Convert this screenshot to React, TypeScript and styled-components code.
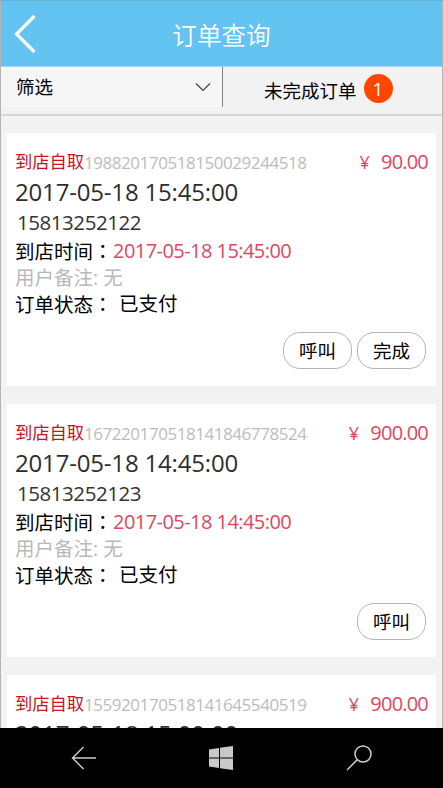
import React from "react";
import styled, { createGlobalStyle } from "styled-components";

const GlobalStyle = createGlobalStyle`
  * { box-sizing: border-box; }
  html, body { margin: 0; padding: 0; }
  body {
    width: 443px;
    height: 788px;
    overflow: hidden;
    background: #f2f2f2;
    font-family: "Open Sans", "Noto Sans CJK SC", sans-serif;
    color: #000;
  }
`;

const Screen = styled.div`
  width: 443px;
  height: 788px;
  display: flex;
  flex-direction: column;
  overflow: hidden;
`;

const Page = styled.div`
  flex: 1;
  min-height: 0;
  display: flex;
  flex-direction: column;
  overflow: hidden;
  background: #f2f2f2;
  border: 1px solid #b4b4b4;
  border-top-color: #67afd2;
  border-bottom: 0;
`;

const Header = styled.header`
  flex: none;
  height: 66px;
  display: grid;
  grid-template-columns: 60px 1fr 60px;
  align-items: center;
  background: #63c3f1;
  border-bottom: 1px solid #a8d8ef;
`;

const BackButton = styled.button`
  width: 48px;
  height: 48px;
  padding: 0;
  border: 0;
  background: none;
  display: flex;
  align-items: center;
  justify-content: center;
`;

const Title = styled.h1`
  margin: 0;
  padding-top: 4px;
  text-align: center;
  font-size: 24.6px;
  line-height: 36px;
  font-weight: 350;
  color: #fff;
`;

const FilterBar = styled.div`
  flex: none;
  height: 49px;
  display: flex;
  align-items: flex-start;
  border-bottom: 2px solid #d7d7d7;
`;

const Filter = styled.div`
  width: 222px;
  height: 40px;
  padding: 0 11px 0 15px;
  display: flex;
  align-items: center;
  justify-content: space-between;
  background: #f6f6f6;
  border-right: 1px solid #858585;
  font-size: 18.5px;
  line-height: 40px;
`;

const Pending = styled.div`
  flex: 1;
  height: 43px;
  padding-left: 41px;
  display: flex;
  align-items: center;
  gap: 7px;
  font-size: 18.5px;
  line-height: 43px;
`;

const PendingLabel = styled.span`
  padding-top: 4px;
`;

const Count = styled.span`
  width: 29px;
  height: 29px;
  border-radius: 50%;
  background: #ff4600;
  color: #fff;
  font-size: 19px;
  font-weight: 400;
  line-height: 30px;
  text-align: center;
`;

const Orders = styled.main`
  padding: 17px 6px 0;
  display: flex;
  flex-direction: column;
  gap: 18px;
`;

const Card = styled.article`
  flex: none;
  height: 253px;
  padding: 15px 8px 17px;
  display: flex;
  flex-direction: column;
  background: #fff;
`;

const Summary = styled.div`
  height: 27px;
  display: flex;
  align-items: center;
  white-space: nowrap;
`;

const Kind = styled.span`
  width: 69px;
  font-size: 17.3px;
  line-height: 27px;
  color: #c8141c;
`;

const OrderNo = styled.span`
  font-size: 17px;
  line-height: 27px;
  padding-top: 2px;
  letter-spacing: -0.45px;
  color: #bcbcbc;
`;

const Price = styled.span`
  margin-left: auto;
  padding-top: 1px;
  font-size: 20px;
  line-height: 27px;
  letter-spacing: -0.8px;
  color: #dc4862;
`;

const Yen = styled.span`
  margin-right: 12px;
  font-size: 18px;
`;

const Placed = styled.div`
  height: 34px;
  font-size: 24px;
  line-height: 33px;
  letter-spacing: -0.18px;
  color: #2e2e2e;
  white-space: nowrap;
`;

const Phone = styled.div`
  height: 28px;
  padding-left: 2px;
  font-size: 20.5px;
  line-height: 27px;
  letter-spacing: -0.45px;
  color: #333;
`;

const Detail = styled.div<{ $muted?: boolean }>`
  height: 26.5px;
  display: flex;
  font-size: 19.5px;
  line-height: 27px;
  white-space: pre;
  color: ${(p) => (p.$muted ? "#b9b9b9" : "#000")};
`;

const Label = styled.span<{ $width: number }>`
  width: ${(p) => p.$width}px;
`;

const Colon = styled.span`
  font-family: "Noto Sans CJK TC", sans-serif;
`;

const Arrival = styled.span`
  font-size: 20px;
  letter-spacing: -0.55px;
  color: #dc4862;
`;

const Actions = styled.div`
  margin-top: auto;
  padding-right: 2px;
  display: flex;
  justify-content: flex-end;
  gap: 5px;
`;

const Action = styled.button`
  width: 69px;
  height: 37px;
  padding: 0;
  border: 1px solid #b4b4b4;
  border-radius: 17px;
  background: #fff;
  color: #000;
  font: inherit;
  font-size: 18.5px;
  line-height: 36px;
`;

const SystemBar = styled.nav`
  flex: none;
  height: 60px;
  padding: 0 14px;
  display: grid;
  grid-template-columns: repeat(3, 1fr);
  align-items: center;
  justify-items: center;
  background: #000;
`;

interface Order {
  no: string;
  price: string;
  placed: string;
  phone: string;
  actions: string[];
}

const orders: Order[] = [
  { no: "198820170518150029244518", price: "90.00", placed: "2017-05-18 15:45:00", phone: "15813252122", actions: ["呼叫", "完成"] },
  { no: "167220170518141846778524", price: "900.00", placed: "2017-05-18 14:45:00", phone: "15813252123", actions: ["呼叫"] },
  { no: "155920170518141645540519", price: "900.00", placed: "2017-05-18 15:00:00", phone: "15813252123", actions: ["呼叫"] },
];

const OrderCard = ({ order }: { order: Order }) => (
  <Card>
    <Summary>
      <Kind>到店自取</Kind>
      <OrderNo>{order.no}</OrderNo>
      <Price>
        <Yen>¥</Yen>
        {order.price}
      </Price>
    </Summary>
    <Placed>{order.placed}</Placed>
    <Phone>{order.phone}</Phone>
    <Detail>
      <Label $width={98}>
        到店时间<Colon>：</Colon>
      </Label>
      <Arrival>{order.placed}</Arrival>
    </Detail>
    <Detail $muted>用户备注: 无</Detail>
    <Detail>
      <Label $width={104}>
        订单状态<Colon>：</Colon>
      </Label>
      <span>已支付</span>
    </Detail>
    <Actions>
      {order.actions.map((a) => (
        <Action key={a}>{a}</Action>
      ))}
    </Actions>
  </Card>
);

export default function App() {
  return (
    <Screen>
      <GlobalStyle />
      <Page>
        <Header>
          <BackButton aria-label="返回">
            <svg width="24" height="40" viewBox="0 0 24 40" fill="none" stroke="#fff" strokeWidth="3.2">
              <path d="M21.5 2 3.5 20 21.5 38" />
            </svg>
          </BackButton>
          <Title>订单查询</Title>
        </Header>
        <FilterBar>
          <Filter>
            <span>筛选</span>
            <svg width="16" height="10" viewBox="0 0 16 10" fill="none" stroke="#444" strokeWidth="1.2">
              <path d="M1 1.5 8 8.5 15 1.5" />
            </svg>
          </Filter>
          <Pending>
            <PendingLabel>未完成订单</PendingLabel>
            <Count>1</Count>
          </Pending>
        </FilterBar>
        <Orders>
          {orders.map((o) => (
            <OrderCard key={o.no} order={o} />
          ))}
        </Orders>
      </Page>
      <SystemBar>
        <svg width="26" height="24" viewBox="0 0 26 24" fill="none" stroke="#d0d0d0" strokeWidth="1.4">
          <path d="M13.5 1 2.5 12 13.5 23M2.5 12H26" />
        </svg>
        <svg width="24" height="24" viewBox="0 0 24 24" fill="#c9c9c9">
          <path d="M0 3.4 10 2v9.4H0zM11 1.8 24 0v11.4H11zM0 12.6h10V22L0 20.6zM11 12.6h13V24L11 22.2z" />
        </svg>
        <svg width="26" height="26" viewBox="0 0 26 26" fill="none" stroke="#d0d0d0" strokeWidth="1.5">
          <circle cx="16" cy="9" r="8" />
          <path d="M10.2 14.8 0 25" />
        </svg>
      </SystemBar>
    </Screen>
  );
}
